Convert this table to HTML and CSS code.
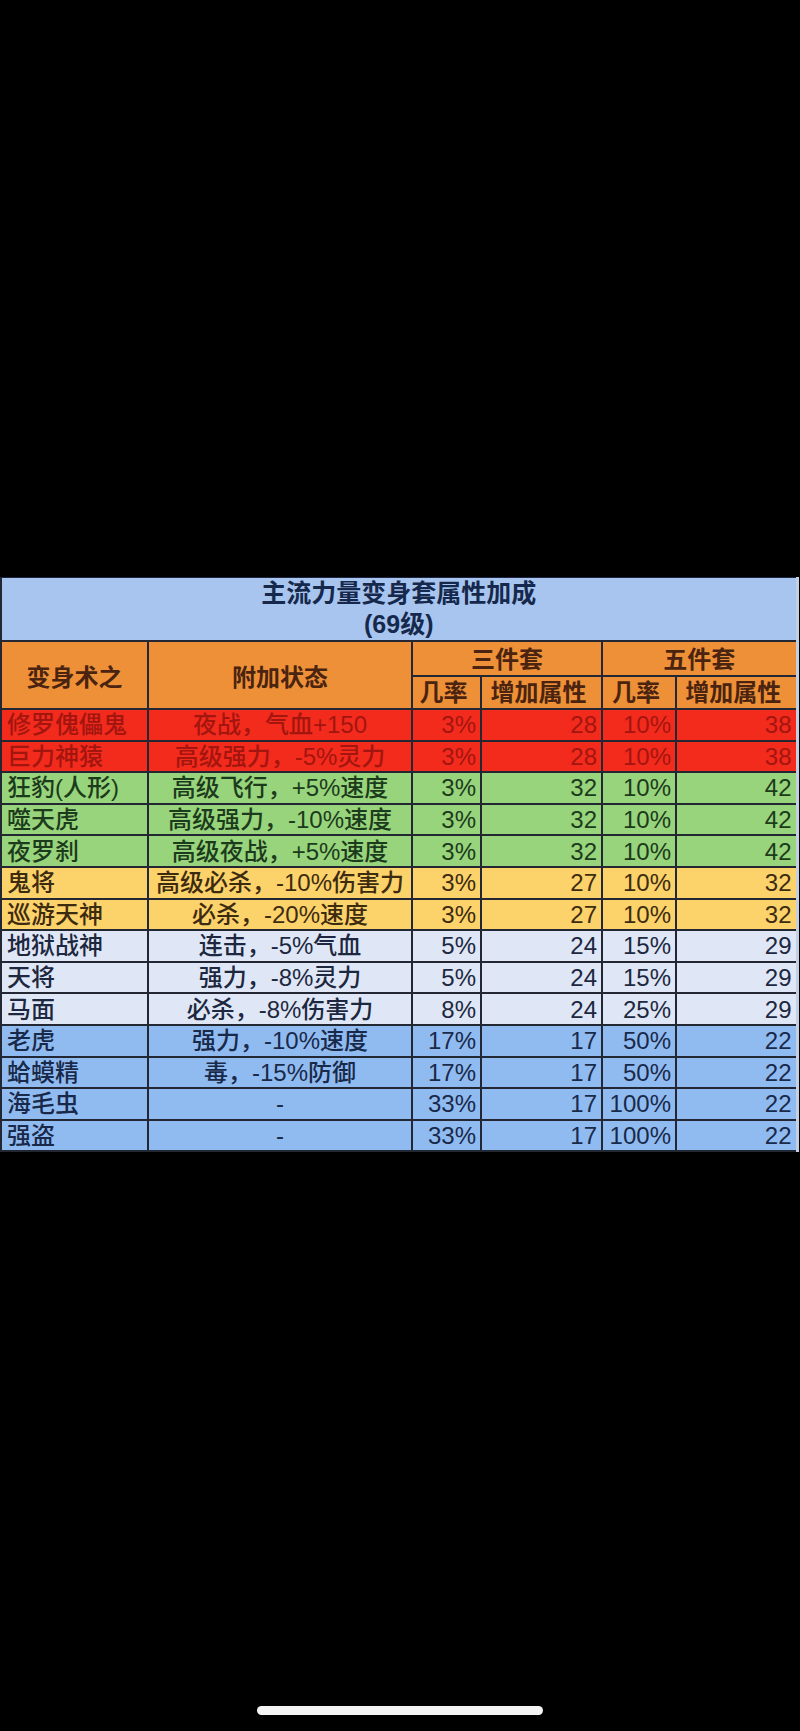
FILE: index.html
```html
<!DOCTYPE html>
<html lang="zh-CN">
<head>
<meta charset="utf-8">
<title>主流力量变身套属性加成</title>
<link rel="stylesheet" href="styles.css">
</head>
<body>
<div class="screen">
  <table class="sheet">
    <colgroup>
      <col class="c-name"><col class="c-state"><col class="c-rate"><col class="c-add"><col class="c-rate2"><col class="c-add2">
    </colgroup>
    <thead>
      <tr class="title-row">
        <th colspan="6" class="title">主流力量变身套属性加成<br>(69级)</th>
      </tr>
      <tr class="head">
        <th rowspan="2">变身术之</th>
        <th rowspan="2">附加状态</th>
        <th colspan="2" class="set">三件套</th>
        <th colspan="2" class="set">五件套</th>
      </tr>
      <tr class="head sub">
        <th>几率</th><th>增加属性</th><th>几率</th><th>增加属性</th>
      </tr>
    </thead>
    <tbody>
      <tr class="red"><td class="name">修罗傀儡鬼</td><td class="state">夜战，气血+150</td><td class="num">3%</td><td class="num">28</td><td class="num">10%</td><td class="num">38</td></tr>
      <tr class="red"><td class="name">巨力神猿</td><td class="state">高级强力，-5%灵力</td><td class="num">3%</td><td class="num">28</td><td class="num">10%</td><td class="num">38</td></tr>
      <tr class="green"><td class="name">狂豹(人形)</td><td class="state">高级飞行，+5%速度</td><td class="num">3%</td><td class="num">32</td><td class="num">10%</td><td class="num">42</td></tr>
      <tr class="green"><td class="name">噬天虎</td><td class="state">高级强力，-10%速度</td><td class="num">3%</td><td class="num">32</td><td class="num">10%</td><td class="num">42</td></tr>
      <tr class="green"><td class="name">夜罗刹</td><td class="state">高级夜战，+5%速度</td><td class="num">3%</td><td class="num">32</td><td class="num">10%</td><td class="num">42</td></tr>
      <tr class="yellow"><td class="name">鬼将</td><td class="state">高级必杀，-10%伤害力</td><td class="num">3%</td><td class="num">27</td><td class="num">10%</td><td class="num">32</td></tr>
      <tr class="yellow"><td class="name">巡游天神</td><td class="state">必杀，-20%速度</td><td class="num">3%</td><td class="num">27</td><td class="num">10%</td><td class="num">32</td></tr>
      <tr class="light"><td class="name">地狱战神</td><td class="state">连击，-5%气血</td><td class="num">5%</td><td class="num">24</td><td class="num">15%</td><td class="num">29</td></tr>
      <tr class="light"><td class="name">天将</td><td class="state">强力，-8%灵力</td><td class="num">5%</td><td class="num">24</td><td class="num">15%</td><td class="num">29</td></tr>
      <tr class="light"><td class="name">马面</td><td class="state">必杀，-8%伤害力</td><td class="num">8%</td><td class="num">24</td><td class="num">25%</td><td class="num">29</td></tr>
      <tr class="blue"><td class="name">老虎</td><td class="state">强力，-10%速度</td><td class="num">17%</td><td class="num">17</td><td class="num">50%</td><td class="num">22</td></tr>
      <tr class="blue"><td class="name">蛤蟆精</td><td class="state">毒，-15%防御</td><td class="num">17%</td><td class="num">17</td><td class="num">50%</td><td class="num">22</td></tr>
      <tr class="blue"><td class="name">海毛虫</td><td class="state">-</td><td class="num">33%</td><td class="num">17</td><td class="num">100%</td><td class="num">22</td></tr>
      <tr class="blue"><td class="name">强盗</td><td class="state">-</td><td class="num">33%</td><td class="num">17</td><td class="num">100%</td><td class="num">22</td></tr>
    </tbody>
  </table>
  <div class="home-bar"></div>
</div>
</body>
</html>
```

FILE: styles.css
```css
html, body {
  margin: 0;
  padding: 0;
  background: #000;
}

.screen {
  width: 800px;
  height: 1731px;
  display: flex;
  flex-direction: column;
  align-items: flex-start;
  padding-top: 577px;
  box-sizing: border-box;
  font-family: "Liberation Sans", "Noto Sans CJK SC", sans-serif;
}

.sheet {
  width: 798px;
  border-collapse: collapse;
  table-layout: fixed;
  border-left: 2px solid #1c2340;
  border-right: 3px solid #c4cfe4;
}

.c-name { width: 147px; }
.c-state { width: 264px; }
.c-rate { width: 69px; }
.c-add { width: 121px; }
.c-rate2 { width: 74px; }
.c-add2 { width: 121px; }

.sheet th,
.sheet td {
  border: 2px solid #232633;
  padding: 0;
  overflow: hidden;
  white-space: nowrap;
}

.title-row th {
  border-top: 1px solid #1c2340;
}

.title {
  background: #a7c5ef;
  color: #16294d;
  font-size: 25px;
  font-weight: 700;
  line-height: 31px;
  height: 60px;
  text-align: center;
  padding-top: 2px;
}

.head th {
  background: #ee9037;
  color: #4a2410;
  font-size: 24px;
  font-weight: 700;
  height: 31px;
  line-height: 30px;
  text-align: center;
}

.head th[rowspan] {
  padding-top: 6px;
}

.head th.set {
  padding-top: 2px;
}

.head.sub th {
  padding-right: 6px;
}

.sheet td {
  height: 29.6px;
  line-height: 29px;
  font-size: 24px;
  font-weight: 500;
}

.name {
  text-align: left;
  padding-left: 5px !important;
}

.state {
  text-align: center;
}

.num {
  text-align: right;
  padding-right: 4px !important;
}

.red td { background: #f32b1d; color: #a3150f; }
.green td { background: #97d47b; color: #1c3a1c; }
.yellow td { background: #fcd26b; color: #3d2b10; }
.light td { background: #dfe7f6; color: #1d2740; }
.blue td { background: #90bbf0; color: #19294a; }

.home-bar {
  margin-top: auto;
  margin-bottom: 16px;
  align-self: center;
  width: 286px;
  height: 9px;
  border-radius: 5px;
  background: #f4f4f4;
}
```
